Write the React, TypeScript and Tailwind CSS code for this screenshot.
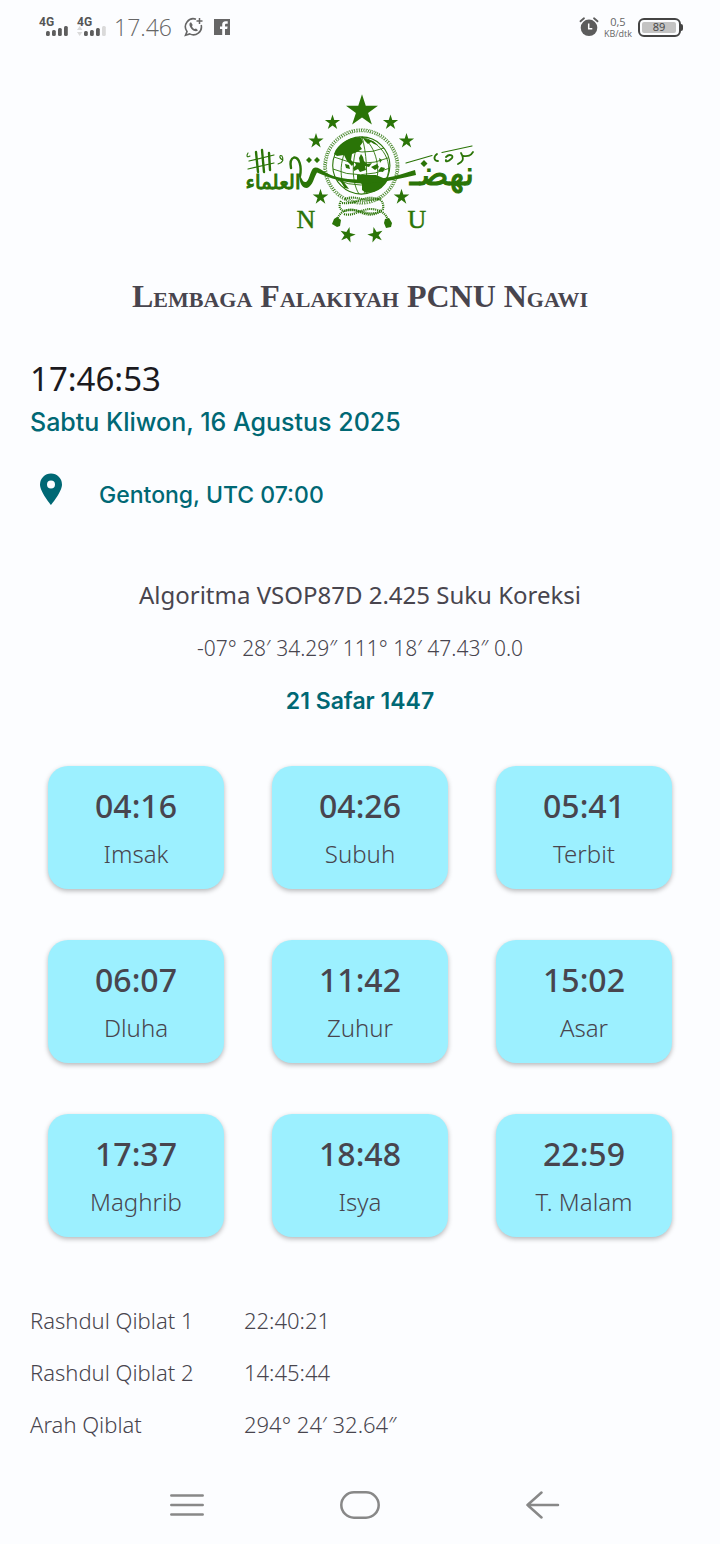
import React from "react";

const GREEN = "#2a7407";

const prayers = [
  { time: "04:16", name: "Imsak" },
  { time: "04:26", name: "Subuh" },
  { time: "05:41", name: "Terbit" },
  { time: "06:07", name: "Dluha" },
  { time: "11:42", name: "Zuhur" },
  { time: "15:02", name: "Asar" },
  { time: "17:37", name: "Maghrib" },
  { time: "18:48", name: "Isya" },
  { time: "22:59", name: "T. Malam" },
];

const qibla = [
  { label: "Rashdul Qiblat 1", value: "22:40:21" },
  { label: "Rashdul Qiblat 2", value: "14:45:44" },
  { label: "Arah Qiblat", value: "294° 24′ 32.64″" },
];

const stars = [
  { x: 362, y: 111, r: 16.8, turn: 0 },
  { x: 332.5, y: 122.5, r: 8, turn: 0 },
  { x: 390.5, y: 122.5, r: 8, turn: 0 },
  { x: 316, y: 141, r: 8, turn: 0 },
  { x: 406.5, y: 141, r: 8, turn: 0 },
  { x: 320.5, y: 197, r: 8.2, turn: 0 },
  { x: 401.5, y: 197, r: 8.2, turn: 0 },
  { x: 347.5, y: 235, r: 8.2, turn: 14 },
  { x: 375.5, y: 235, r: 8.2, turn: -14 },
];

function starPoints(x: number, y: number, r: number, turn: number) {
  return Array.from({ length: 10 }, (_, i) => {
    const radius = i % 2 === 0 ? r : r * 0.38;
    const angle = ((i * 36 - 90 + turn) * Math.PI) / 180;
    return `${(x + radius * Math.cos(angle)).toFixed(2)},${(y + radius * Math.sin(angle)).toFixed(2)}`;
  }).join(" ");
}

function Logo() {
  return (
    <svg viewBox="240 90 240 156" className="h-[156px] w-[240px]" role="img" aria-label="Nahdlatul Ulama">
      <g fill={GREEN}>
        {stars.map((s) => (
          <polygon key={`${s.x}-${s.y}`} points={starPoints(s.x, s.y, s.r, s.turn)} />
        ))}
      </g>

      {/* rope ring */}
      <g fill="none" stroke={GREEN}>
        <circle cx="361.3" cy="166.5" r="37.6" strokeWidth="0.7" strokeDasharray="1.6 1" />
        <circle cx="361.3" cy="166.5" r="34.8" strokeWidth="0.7" strokeDasharray="1.6 1" />
        <circle cx="361.3" cy="166.5" r="36.2" strokeWidth="2.4" strokeDasharray="0.8 1.5" />
      </g>

      {/* globe */}
      <circle cx="361.3" cy="165.5" r="28.6" fill="#fcfdff" stroke={GREEN} strokeWidth="1.1" />
      <g fill="none" stroke={GREEN} strokeWidth="0.9">
        <path d="M362 137C352 150 350 180 359 194M362 137C366 150 369 178 364 194M362 137C376 145 383 172 373 191M362 137C388 145 395 170 383 184M360 137C341 144 337 174 345 188" />
        <path d="M340 146Q362 157 384 148M334 157Q362 169 388 158M333 169Q360 181 390 168M337 180Q360 190 386 180" />
      </g>
      <g fill={GREEN}>
        <path d="M338 147C344 140 353 137 361 137.500L363 142L360 146L362 149L357 152L352 154L351 160L354 163L352 166L347 161L344 155L337 156L334 154Q335 150 338 147Z" />
        <path d="M363 138L373 141L378 145L374 144L371 142L368 144L365 141Z" />
        <path d="M357 175L376 175L388 180Q383 189 374 192L366 193L362 190L362 184L357 181Z" />
        <path d="M353 168L356 165L355 163L360 163L359 158L361 154L363 157L364 161L367 164L372 163L369 167L365 166L366 170L360 172L358 169L354 171Z" />
        <path d="M345 164l4 1 1 4-4-1zM371 167l6-3 2 3-4 3zM379 158l3 2-2 3zM338 178l5 3 6 8-4-1zM381 167l4 1-2 4-5-1z" />
      </g>

      {/* ribbon sweeping across the globe */}
      <path
        d="M299 176C302 176 302 183 306 182C309 181 310 172 313 168.500C316 166 320 169 324 171.500C336 179 350 179.500 362 179.500C382 180 397 176 410 171.500L415 170L416 175C402 178 385 182.500 364 183.500C346 183.500 329 178 317 172.500C314 177 313 186 307 188C301 188 300 182 299 176Z"
        fill={GREEN}
      />
      <path d="M309 157l3 3-3 3-3-3zM317 157l3 3-3 3-3-3zM424 160l3.500 3.500-3.500 3.500-3.500-3.500z" fill={GREEN} />

      {/* ornaments above and around the calligraphy */}
      <g fill="none" stroke={GREEN} strokeLinecap="round">
        <path d="M249 161L274 155M248 169L274 163M406 163L432 155.500M442 152.500L472 146" strokeWidth="1.200" />
        <path d="M278 164C283 163 284 159 282 156C280 154 278 158 283 160" strokeWidth="1.100" />
        <path d="M437 154C433 157 434 161 438 161M446 157C450 153 455 156 451 159C448 162 445 162 446 160M461 153C465 160 462 162 458 164M463 156C467 156 470 157 473 152" strokeWidth="1.800" />
        <path d="M248 153C246 156 247 158 250 156" strokeWidth="1.100" />
        <path d="M256 152L258 172M262 150L264 172M269 153L270 170" strokeWidth="2.400" />
        <path d="M300 176C302 166 299 157 294 157.500C290 159 290 163 291 168" strokeWidth="2.400" />
      </g>

      {/* calligraphy */}
      <g
        fill={GREEN}
        stroke={GREEN}
        strokeWidth="1"
        direction="rtl"
        textAnchor="middle"
        className="font-['DejaVu_Sans',sans-serif]"
      >
        <text x="273" y="189" fontSize="20">العلماء</text>
        <text x="442" y="185" fontSize="34">نهضـ</text>
      </g>

      {/* knotted cord with tassels */}
      <g fill="none" stroke={GREEN} strokeWidth="2.2" strokeDasharray="1.1 0.9">
        <path d="M345 199C356 194 364 204 381 198" />
        <path d="M342 203C358 205 366 193 379 200" />
        <path d="M341 201C338 206 340 210 344 211C360 207 367 218 381 211" />
        <path d="M337 220C340 210 350 207 360 212C370 217 378 214 383 209C384 204 382 200 378 199" />
        <path d="M344 214C352 217 362 209 370 209C379 209 386 213 388 220" />
      </g>
      <g fill={GREEN}>
        <path d="M337 217l4 3-1 6-3 1-5-3 2-5z" />
        <path d="M385 219l4-1 3 5-1 4-5 1-2-5z" />
      </g>

      <g fill={GREEN} stroke={GREEN} strokeWidth="0.4" textAnchor="middle" className="font-['Liberation_Serif',serif]" fontSize="26">
        <text x="306" y="228">N</text>
        <text x="417" y="228">U</text>
      </g>
    </svg>
  );
}

function Signal({ roaming }: { roaming?: boolean }) {
  return (
    <span className="relative block h-[22px] w-[30px]">
      <span className="absolute top-0 left-0 font-['Roboto',sans-serif] text-xs leading-3 font-bold text-[#555]">4G</span>
      <svg viewBox="0 0 30 22" className="h-[22px] w-[30px]" aria-hidden="true">
        {roaming && <path d="M0 14L2.700 10L5.400 14ZM0 16L2.700 20L5.400 16Z" fill="#dadada" />}
        <g fill="#5e5e5e">
          <rect x="7" y="15" width="3.800" height="5" rx="1.500" />
          <rect x="13" y="14" width="3.800" height="6" rx="1.500" />
          <rect x="19" y="12" width="3.800" height="8" rx="1.500" />
          <rect x="25" y="10" width="3.800" height="10" rx="1.500" fill={roaming ? "#dadada" : "#5e5e5e"} />
        </g>
      </svg>
    </span>
  );
}

function StatusBar() {
  return (
    <header className="flex h-[54px] items-center justify-between px-[39px] text-[#666]">
      <div className="flex items-center">
        <Signal />
        <span className="w-2" />
        <Signal roaming />
        <span className="ml-[7px] font-['Open_Sans',sans-serif] text-[23px] font-light">17.46</span>
        <svg viewBox="0 0 20 20" className="ml-3 h-5 w-5" fill="none" stroke="#666" aria-hidden="true">
          <path d="M12 2.200A8 8 0 0 0 3 14.500L1.500 18.300L5.700 16.900A8 8 0 0 0 17.200 8" strokeWidth="1.600" />
          <path d="M15.500 1V7M12.500 4H18.500" strokeWidth="1.500" />
          <path d="M6.200 5.500C4.700 7 5.300 9.500 7.500 11.900C9.800 14.100 12.500 15 14 13.200L12 11.400L10.700 12.100C9.500 11.500 8.500 10.500 8 9.200L8.700 7.900L7.200 5.600Z" fill="#666" stroke="none" />
        </svg>
        <svg viewBox="0 0 16 16" className="ml-[10px] h-4 w-4" aria-hidden="true">
          <path
            fill="#666"
            fillRule="evenodd"
            d="M0 0H16V16H11V10H13.200L13.600 7.400H11V6C11 5 11.500 4.700 12.300 4.700H13.700V2.300H11.500C9.300 2.300 8.200 3.600 8.200 5.700V7.400H6V10H8.200V16H0Z"
          />
        </svg>
      </div>
      <div className="flex items-center">
        <svg viewBox="0 0 20 20" className="h-5 w-5" fill="none" aria-hidden="true">
          <circle cx="10" cy="10.800" r="8.300" fill="#5c5c5c" />
          <path d="M1.500 4.300L5 1.300M15 1.300L18.500 4.300" stroke="#5c5c5c" strokeWidth="1.800" strokeLinecap="round" />
          <path d="M9.700 6.500V11.700H13.300" stroke="#fff" strokeWidth="1.500" />
        </svg>
        <div className="ml-[5px] text-center font-['Open_Sans',sans-serif]">
          <div className="text-[11px] leading-3">0,5</div>
          <div className="text-[9px] leading-[11px]">KB/dtk</div>
        </div>
        <div className="relative ml-[6px] h-[19px] w-[43px] rounded-md border-2 border-[#444] p-[2px]">
          <div className="flex h-full w-[34px] items-center justify-center rounded-xs bg-[#c3c3c3] font-['Open_Sans',sans-serif] text-[11px] text-[#444]">
            89
          </div>
          <span className="absolute top-1 -right-1 h-[7px] w-[2px] rounded-r bg-[#444]" />
        </div>
      </div>
    </header>
  );
}

export default function App() {
  return (
    <div className="flex min-h-screen flex-col bg-[#fcfdff] font-['Noto_Sans',sans-serif] text-[#48454e]">
      <StatusBar />

      <main className="flex-1 pt-9">
        <div className="flex justify-center">
          <Logo />
        </div>
        <h1 className="mt-[30px] text-center font-['Liberation_Serif',serif] text-[32px] leading-10 font-bold [font-variant-caps:small-caps]">
          Lembaga Falakiyah PCNU Ngawi
        </h1>

        <section className="mt-[39px] px-[30px]">
          <p className="text-[33px] leading-12 text-[#1b1a1e]">17:46:53</p>
          <p className="font-['Inter',sans-serif] text-[25px] leading-[38px] font-medium text-[#006874]">
            Sabtu Kliwon, 16 Agustus 2025
          </p>
          <div className="mt-[30px] flex h-12 items-center text-[#006874]">
            <svg viewBox="0 0 24 32" className="mr-9 mb-3 ml-[9px] h-8 w-6" aria-hidden="true">
              <path
                fill="currentColor"
                fillRule="evenodd"
                d="M12 0.500A11 11 0 0 0 1 11.500C1 19 12 32 12 32S23 19 23 11.500A11 11 0 0 0 12 0.500ZM12 7.500A4 4 0 1 1 12 15.500A4 4 0 0 1 12 7.500Z"
              />
            </svg>
            <p className="font-['Inter',sans-serif] text-[23px] leading-8 font-medium">Gentong, UTC 07:00</p>
          </div>
        </section>

        <section className="mt-[50px] text-center">
          <h2 className="text-2xl leading-[52px]">Algoritma VSOP87D 2.425 Suku Koreksi</h2>
          <p className="text-[21px] leading-[54px] font-light">-07° 28′ 34.29″ 111° 18′ 47.43″ 0.0</p>
          <p className="font-['Inter',sans-serif] text-[23px] leading-[52px] font-semibold text-[#006874]">
            21 Safar 1447
          </p>
        </section>

        <ul className="mt-[39px] grid grid-cols-3 gap-x-12 gap-y-[51px] px-12">
          {prayers.map((p) => (
            <li
              key={p.name}
              className="rounded-[20px] bg-[#9cf0ff] pt-4 pb-[11px] text-center shadow-[0_2px_5px_rgba(0,0,0,0.28)]"
            >
              <p className="text-[32px] leading-12 font-medium">{p.time}</p>
              <p className="text-2xl leading-12 font-light">{p.name}</p>
            </li>
          ))}
        </ul>

        <table className="mt-[57px] ml-[30px] text-left text-[22px] leading-[52px] font-light">
          <tbody>
            {qibla.map((row) => (
              <tr key={row.label}>
                <th scope="row" className="w-[214px] p-0 font-light">
                  {row.label}
                </th>
                <td className="p-0">{row.value}</td>
              </tr>
            ))}
          </tbody>
        </table>
      </main>

      <nav className="mt-[14px] grid h-[78px] grid-cols-[1fr_40px_1fr] items-center px-[170px]" aria-label="System">
        <button type="button" aria-label="Recent apps" className="justify-self-start">
          <svg viewBox="0 0 34 24" className="h-6 w-[34px]" stroke="#888" strokeWidth="2.500" strokeLinecap="round" aria-hidden="true">
            <path d="M1.300 2.500H32.700M1.300 12H32.700M1.300 21.500H32.700" />
          </svg>
        </button>
        <button type="button" aria-label="Home">
          <svg viewBox="0 0 40 28" className="h-7 w-10" fill="none" stroke="#888" strokeWidth="2.500" aria-hidden="true">
            <rect x="1.300" y="1.300" width="37.400" height="25.400" rx="12.700" />
          </svg>
        </button>
        <button type="button" aria-label="Back" className="-mr-[10px] justify-self-end">
          <svg viewBox="0 0 34 28" className="h-7 w-[34px]" fill="none" stroke="#888" strokeWidth="2.500" strokeLinecap="round" strokeLinejoin="round" aria-hidden="true">
            <path d="M15.500 1.500L1.500 14L15.500 26.500M1.500 14H32" />
          </svg>
        </button>
      </nav>
    </div>
  );
}
